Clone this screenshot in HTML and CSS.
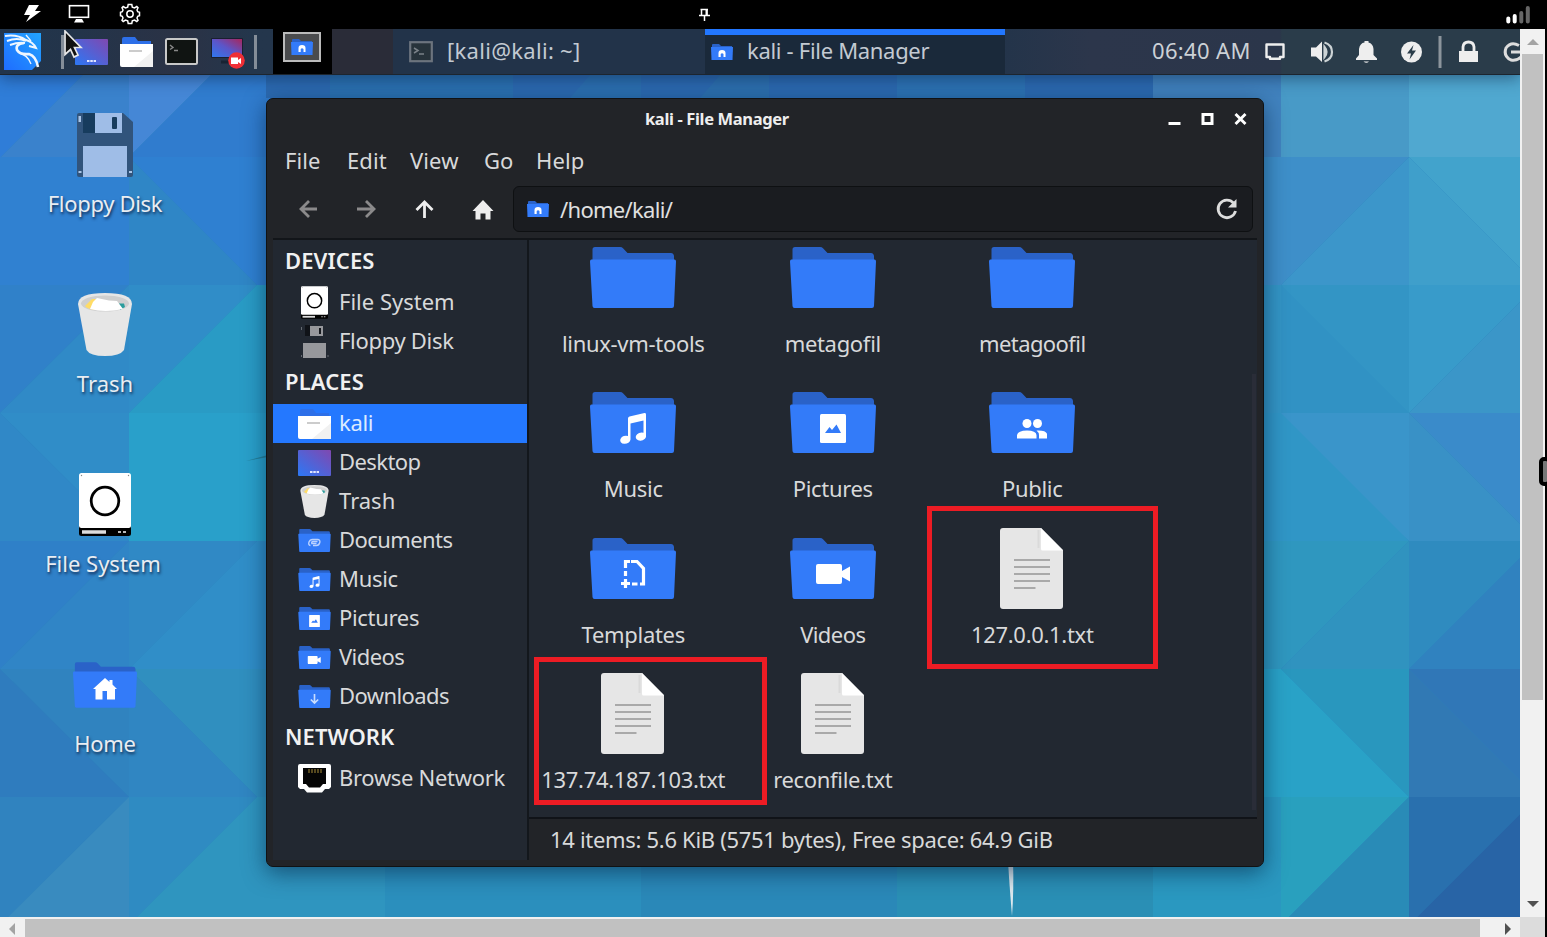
FILE: index.html
```html
<!DOCTYPE html>
<html lang="en">
<head>
<meta charset="utf-8">
<title>kali - File Manager</title>
<link rel="stylesheet" href="styles.css">
</head>
<body>
<svg class="defs" width="0" height="0">
  <defs>
    <linearGradient id="desk" x1="0" y1="1" x2="1" y2="0"><stop offset="0" stop-color="#2c78f5"/><stop offset="1" stop-color="#8048b0"/></linearGradient>
    <linearGradient id="rec" x1="0" y1="1" x2="1" y2="0"><stop offset="0" stop-color="#2f78f0"/><stop offset=".5" stop-color="#5c55c8"/><stop offset="1" stop-color="#a8265c"/></linearGradient>
    <linearGradient id="logo" x1="0" y1="1" x2="1" y2="0"><stop offset="0" stop-color="#1f6dff"/><stop offset="1" stop-color="#22a4ff"/></linearGradient>
    <symbol id="folder" viewBox="0 0 86 61">
      <path d="M2.500 15V2.500Q2.500 0 5 0H30Q32 0 33 1.200L37.500 6H81Q83.500 6 84 9V15Z" fill="#2a62c8"/>
      <path d="M1.500 12.500H84.500Q86 12.500 86 14.500L84 59Q83.900 61 82 61H4.500Q2.600 61 2.500 59L0 14.500Q0 12.500 1.500 12.500Z" fill="#337bf9"/>
    </symbol>
    <symbol id="g-home" viewBox="0 0 24 22"><path d="M12 0L0 11H2.500V21.500H9.500V13H14V21.500H22V11H24L19.500 6.500V2H16.500V4Z" fill="#fff"/></symbol>
    <symbol id="g-music" viewBox="0 0 26 31"><path d="M8 5.500Q8 4 9.500 3.600L24.500 .1Q26 0 26 1.500V22.500A5.200 4 -15 1 1 23.500 19.800V7.500L10.500 10.500V26.500A5.200 4 -15 1 1 8 23Z" fill="#fff"/></symbol>
    <symbol id="g-pic" viewBox="0 0 26 29"><rect width="26" height="29" rx="1.500" fill="#fff"/><path d="M5 19L9.500 13L12 16L16.500 10.500L21 19Z" fill="#337bf9"/></symbol>
    <symbol id="g-people" viewBox="0 0 30 20"><g fill="#fff"><circle cx="10" cy="4.500" r="4.500"/><circle cx="20.500" cy="4.500" r="4.500"/><path d="M0 19.500V16Q1 11.500 10 11.500T19.500 16V19.500ZM19.500 11.500Q30 11 30.200 16V19.500H22V16Q22 13.500 19.500 11.500Z"/></g></symbol>
    <symbol id="g-tpl" viewBox="0 0 25 30"><path d="M4.500 9V2.500H9M10 2.500H16L22.500 9.500V25H19M4.500 12V17M11 25H16.500M4.500 20V29M0 24.500H9" fill="none" stroke="#fff" stroke-width="3.200"/></symbol>
    <symbol id="g-video" viewBox="0 0 36 20"><path d="M2 0H24Q26 0 26 2V7L34 2.500V17.500L26 13V18Q26 20 24 20H2Q0 20 0 18V2Q0 0 2 0Z" fill="#fff"/></symbol>
    <symbol id="g-down" viewBox="0 0 10 12"><path d="M5 0V10M1 6L5 10L9 6" fill="none" stroke="#c7dcff" stroke-width="1.800"/></symbol>
    <symbol id="g-clip" viewBox="0 0 14 10"><path d="M3 8Q.5 7.500 1.500 4.500Q2.500 2 5 2H10Q13 2.200 12.300 5Q11.500 8 9 8H5.500M10 4H5.500Q3.800 4.200 4.300 6H9" fill="none" stroke="#b9d1ff" stroke-width="1.400"/></symbol>
    <symbol id="doc" viewBox="0 0 64 81">
      <path d="M3 0H41L63 22V78Q63 81 60 81H3Q0 81 0 78V3Q0 0 3 0Z" fill="#e6e6e6"/>
      <path d="M38.500 2V20" stroke="#dadada" stroke-width="2"/>
      <path d="M41 0L63 22.500H42.500Q41 22.500 41 21Z" fill="#fff"/>
      <path d="M14 32H50M14 39H50M14 46H50M14 53H50M14 60H35.500" stroke="#a9a9a9" stroke-width="1.900"/>
    </symbol>
    <symbol id="trash" viewBox="0 0 54 63">
      <path d="M0 11Q0 0 27 0T54 11L46 57Q42 63 27 63T8.500 57Z" fill="#e6e6e6"/>
      <ellipse cx="27" cy="10.500" rx="24" ry="8" fill="#cfcfcf"/>
      <path d="M7 13L14 6H18V17Q9 16 7 13Z" fill="#ffdc66"/><path d="M41 10.500H46L47 14L42 17Z" fill="#2a9d9d"/>
      <path d="M12 16L15 9L19 5L31 7.500L39 8L45 16Q27 20 12 16Z" fill="#fff"/>
    </symbol>
    <symbol id="drive" viewBox="0 0 52 63">
      <rect y="50" width="52" height="13" rx="2.500" fill="#000"/><rect width="52" height="55" rx="2.500" fill="#fff"/>
      <circle cx="26" cy="28" r="13.800" fill="none" stroke="#000" stroke-width="2.800"/>
      <path d="M3 59H27" stroke="#ddd" stroke-width="3.500"/><path d="M39 59H42M44 59H47" stroke="#bbb" stroke-width="2"/>
      <circle cx="2.500" cy="2.500" r=".7" fill="#888"/><circle cx="49.500" cy="2.500" r=".7" fill="#888"/>
    </symbol>
    <symbol id="deskicon" viewBox="0 0 33 26"><rect width="33" height="26" rx="1" fill="url(#desk)"/><path d="M12 22H21" stroke="#dfe5ff" stroke-width="2" stroke-dasharray="2.500 .8"/></symbol>
    <symbol id="openfolder" viewBox="0 0 33 30"><path d="M2 9V2Q2 0 4 0H15L18 4H31V9Z" fill="#2d6fe8"/><path d="M0 7H33V28Q33 30 31 30H2Q0 30 0 28Z" fill="#fff"/><path d="M33 14V30H14Z" fill="#f1f1f1"/><path d="M9 14H22" stroke="#ccc" stroke-width="2"/></symbol>
    <symbol id="minihome" viewBox="0 0 22 16"><path d="M1 4V1Q1 0 2 0H8L10 2H21V4Z" fill="#2a62c8"/><path d="M0 3H22L21.500 16H.5Z" fill="#337bf9"/><path d="M7.500 13V9Q7.500 6 11 6T14.500 9V13H12.500V10Q11 8.500 9.700 10V13Z" fill="#fff"/></symbol>
  </defs>
</svg>

<div class="viewer">
  <header class="topbar">
    <svg class="top-left" width="160" height="29" viewBox="0 0 160 29">
      <path d="M29 5H39L35 11H41L26 22L30 15H24Z" fill="#fff"/>
      <rect x="69.500" y="5.700" width="19" height="11.600" fill="none" stroke="#fff" stroke-width="1.600"/><path d="M76 19H82L84 22.500H74Z" fill="#fff"/>
      <path d="M128.200 4.500H131.800L132.300 7.200L134.500 8L136.800 6.500L138 7.700L137 10L137.700 11.700L139.500 12.200V15.800L137.700 16.300L137 18L138 20.300L136.800 21.500L134.500 20L132.300 20.800L131.800 23.500H128.200L127.700 20.800L125.500 20L123.200 21.500L122 20.300L123 18L122.300 16.300L120.500 15.800V12.200L122.300 11.700L123 10L122 7.700L123.200 6.500L125.500 8L127.700 7.200Z" fill="none" stroke="#fff" stroke-width="1.500"/>
      <circle cx="130" cy="14" r="3.200" fill="none" stroke="#fff" stroke-width="1.500"/>
    </svg>
    <svg class="pin" width="12" height="14" viewBox="0 0 12 14"><path d="M1.500 1.500H9M2.500 1V7M8 1V7M0 7.500H11M5.500 8V13" fill="none" stroke="#fff" stroke-width="1.500"/><path d="M7.500 1V7" stroke="#fff" stroke-width="2"/></svg>
    <svg class="signal" width="26" height="20" viewBox="0 0 26 20" stroke-width="4" stroke-linecap="round"><path d="M2.300 13.500V16.500M8.700 11V16.500" stroke="#fff"/><path d="M15.300 8V16.500M21.800 3V16.500" stroke="#666"/></svg>
  </header>

  <div class="middle">
    <div class="desktop">
      <svg class="wallpaper" width="1520" height="888" viewBox="0 29 1520 888">
        <rect y="29" width="1520" height="888" fill="#2b82bd"/>
        <g>
          <path d="M0 29H129L1 157H0Z" fill="#2f7dd8"/><path d="M129 29V157H1Z" fill="#3a82cc"/>
          <path d="M129 29H257L129 157Z" fill="#4587d6"/><path d="M257 29H285V157H129Z" fill="#307cce"/>
          <path d="M266 29H1153V98H266Z" fill="#2c6bb2"/>
          <path d="M330 75H513V98H330Z" fill="#2b72b2"/><path d="M590 75H641V98H570Z" fill="#2c71b2"/><path d="M720 75H769V98H700Z" fill="#2d71b0"/><path d="M897 75H1025V98H897Z" fill="#2d74b5"/>
          <path d="M1153 29H1285V157H1153Z" fill="#4183bf"/>
          <path d="M1281 29H1409V157H1281Z" fill="#489ac7"/><path d="M1409 29H1520V157H1409Z" fill="#50a8d0"/>
          <path d="M0 157H129V285H0Z" fill="#3081d1"/>
          <path d="M129 157L257 285H129Z" fill="#2f86c6"/><path d="M129 157H285V285H257Z" fill="#2f80d1"/>
          <path d="M0 285H129L0 413Z" fill="#3081c9"/><path d="M129 285V413H0Z" fill="#308ac7"/>
          <path d="M129 285H257L129 413Z" fill="#308dc8"/><path d="M257 285H285V413H129Z" fill="#299bc5"/>
          <path d="M0 413H129V541Z" fill="#308dc8"/><path d="M0 413L129 541H0Z" fill="#3088c7"/>
          <path d="M129 413H285V541H129Z" fill="#29a0ca"/><path d="M246 461L268 455V457Z" fill="#247f97"/>
          <path d="M0 541H129L0 669Z" fill="#2f80c8"/><path d="M129 541V669H0Z" fill="#3085c6"/>
          <path d="M129 541H257L129 669Z" fill="#3089c5"/><path d="M257 541H285V669H129Z" fill="#308ec8"/>
          <path d="M0 669H129V797Z" fill="#3083bf"/><path d="M0 669L129 797H0Z" fill="#2f7cbe"/>
          <path d="M129 669H285V797H257Z" fill="#308fbf"/><path d="M129 669L257 797H129Z" fill="#3086c2"/>
          <path d="M0 797H129L0 925Z" fill="#3083bf"/><path d="M129 797V925H0Z" fill="#398bbf"/>
          <path d="M129 797H257L129 925Z" fill="#2f8bc2"/><path d="M257 797H385V925H129Z" fill="#2f95bf"/>
        </g>
        <g>
          <path d="M1260 157H1409L1281 285H1260Z" fill="#3e8fc9"/><path d="M1409 157V285H1281Z" fill="#3c96ca"/>
          <path d="M1409 157H1537V285Z" fill="#42a3cc"/><path d="M1409 157L1537 285H1409Z" fill="#3f9fcb"/>
          <path d="M1260 285H1409V413H1260Z" fill="#3395c5"/><path d="M1281 285L1409 413H1281Z" fill="#3192c4"/>
          <path d="M1409 285H1537L1409 413Z" fill="#389bca"/><path d="M1537 285V413H1409Z" fill="#3b96c8"/>
          <path d="M1260 413H1409V541Z" fill="#3a95ca"/><path d="M1260 413H1281L1409 541H1260Z" fill="#3096c6"/>
          <path d="M1409 413H1537V541Z" fill="#3a8bca"/><path d="M1409 413L1537 541H1409Z" fill="#3991c6"/>
          <path d="M1260 541H1409L1281 669H1260Z" fill="#2f97bf"/><path d="M1409 541V669H1281Z" fill="#3093bf"/>
          <path d="M1409 541H1537L1409 669Z" fill="#2f8bbf"/><path d="M1537 541V669H1409Z" fill="#3082bf"/>
          <path d="M1281 669H1409V797Z" fill="#2997be"/><path d="M1260 669H1281L1409 797H1260Z" fill="#29a2c7"/>
          <path d="M1409 669H1537V797Z" fill="#3077b7"/><path d="M1409 669L1537 797H1409Z" fill="#3179b4"/>
          <path d="M1281 797H1409L1281 925Z" fill="#29a0be"/><path d="M1409 797V925H1281Z" fill="#298bb7"/>
          <path d="M1409 797H1537L1409 925Z" fill="#2970ae"/><path d="M1537 797V925H1409Z" fill="#2864a6"/>
          <path d="M385 797H641V925H385Z" fill="#2b8fbd"/><path d="M641 797H897V925H641Z" fill="#2a88b8"/><path d="M897 797H1153V925H897Z" fill="#2a8fb5"/><path d="M1153 797H1281V925H1153Z" fill="#2a98c0"/>
        </g>
        <path d="M1008 860Q1009 880 1012 916Q1014 890 1013 860Z" fill="#dce8ee"/>
      </svg>

      <nav class="panel">
        <svg class="logo" width="37" height="37" viewBox="0 0 37 37"><path d="M0 0H37V28L28 37H0Z" fill="url(#logo)"/>
          <path d="M1 3Q13 1 22 7Q29 9 32 15L25 13M3 8Q13 4 22 8M6 12Q14 9 21 10" fill="none" stroke="#eef6ff" stroke-width="1.900"/><path d="M20 10Q11 11 13 17Q16 22 25 21Q32 23 34 34" fill="none" stroke="#eef6ff" stroke-width="2.600"/><path d="M15 20Q24 22 27 31M22 2L27 8" fill="none" stroke="#eef6ff" stroke-width="1.300"/></svg>
        <i class="bar"></i>
        <svg class="l1" width="33" height="26"><use href="#deskicon"/></svg>
        <svg class="l2" width="33" height="30"><use href="#openfolder"/></svg>
        <svg class="l3" width="33" height="27" viewBox="0 0 33 27"><rect x="1" y="1" width="31" height="25" rx="1.500" fill="#101412" stroke="#c8c8c8" stroke-width="2"/><path d="M5 7L8 9.500L5 11.500M9 12.500H13" fill="none" stroke="#888" stroke-width="1.400"/></svg>
        <svg class="l4" width="34" height="31" viewBox="0 0 34 31"><rect width="32" height="20" rx="1" fill="#1a2030"/><rect x="1" y="1" width="30" height="18" fill="url(#rec)"/><path d="M10 24H24" stroke="#182333" stroke-width="3"/><circle cx="25.500" cy="22.500" r="8.300" fill="#f02f35"/><path d="M20 19.500H27V26H20ZM27 22L30 20V26L27 24Z" fill="#fff"/></svg>
        <i class="bar bar2"></i>
        <div class="workspace"><span><svg width="22" height="16"><use href="#minihome"/></svg></span></div>
        <div class="gap"></div>
        <div class="task"><svg width="24" height="22" viewBox="0 0 24 22"><rect x="1.200" y="1.200" width="21.600" height="19" fill="#27333b" stroke="#6c747e" stroke-width="2.200"/><path d="M5 7L9 9.500L5 12M10 13H15" stroke="#7a8188" fill="none" stroke-width="1.500"/></svg><span class="t-term">[kali@kali: ~]</span></div>
        <div class="task active"><svg width="22" height="16"><use href="#minihome"/></svg><span class="t-fm">kali - File Manager</span></div>
        <span class="clock">06:40 AM</span>
        <svg class="tray" width="246" height="46" viewBox="1264 29 246 46" fill="#eee">
          <path d="M1266.500 44.500H1283.500V57H1280V58.800H1270V57H1266.500Z" fill="none" stroke="#eee" stroke-width="2.400" stroke-linejoin="round"/>
          <path d="M1311 47.500H1316L1322 41.500V62L1316 56.500H1311Z"/><path d="M1324.500 47Q1328.500 52 1324.500 57ZM1324.500 42.500Q1332 45 1332 52T1324.500 61.500" fill="none" stroke="#ccd3d5" stroke-width="2.200"/>
          <path d="M1356 60V58.500L1359 55V49Q1360 43 1364.500 42.500V41H1368.500V42.500Q1373 43.500 1373.500 49V55L1377 58.500V60ZM1363.500 61.500H1369Q1366.500 64 1363.500 61.500Z"/>
          <circle cx="1411.500" cy="52" r="10.500"/><path d="M1413.500 45L1407 53.500H1411L1409.500 59.500L1416 50.500H1412Z" fill="#2b3d4a"/>
          <path d="M1440 36V68" stroke="#8c959c" stroke-width="3"/>
          <path d="M1459 51H1478V62H1459Z"/><path d="M1463 51V47Q1463.500 42 1468.500 42T1474 47V51" fill="none" stroke="#eee" stroke-width="2.800"/>
        </svg>
        <svg class="power" width="17" height="20" viewBox="1503 42 17 20"><path d="M1519 45.500Q1511 41 1506 48Q1503 56 1511 60Q1517 61 1521 57M1511 52H1521" fill="none" stroke="#ddd" stroke-width="3"/></svg>
      </nav>
      <svg class="cursor" width="21" height="30" viewBox="0 0 21 30"><path d="M2 1L18 17.500H11.500L15 25L11 27L7.500 19.500L2 24.500Z" fill="#111" stroke="#e8e8e8" stroke-width="1.700"/></svg>

      <div class="shortcut s1"><svg width="56" height="64" viewBox="0 0 56 64"><path d="M2 0H46L56 9V62Q56 64 54 64H2Q0 64 0 62V2Q0 0 2 0Z" fill="#31547c"/><path d="M6 0H18V20H6Z" fill="#173c5e"/><path d="M18 0H45V20H18ZM6 33H50V64H6Z" fill="#9fbde7"/><rect x="35" y="4" width="5" height="12" rx="1" fill="#173c5e"/><path d="M1.500 3H4V9H1.500ZM1.500 58H4.500V60H1.500ZM52 58H55V60H52Z" fill="#aac5e7"/></svg><span>Floppy Disk</span></div>
      <div class="shortcut s2"><svg width="54" height="63"><use href="#trash"/></svg><span>Trash</span></div>
      <div class="shortcut s3"><svg width="52" height="63"><use href="#drive"/></svg><span>File System</span></div>
      <div class="shortcut s4"><svg width="64" height="46"><use href="#folder" width="64" height="46"/><use href="#g-home" x="20" y="16" width="24" height="22"/></svg><span>Home</span></div>

      <section class="window">
        <div class="titlebar"><span></span><b>kali - File Manager</b>
          <svg width="84" height="18" viewBox="1167 110 84 18" fill="none" stroke="#fff"><path d="M1168.500 123.500H1180.500" stroke-width="3"/><rect x="1203" y="114.500" width="9" height="9" stroke-width="3"/><path d="M1235.500 114L1245.500 124M1245.500 114L1235.500 124" stroke-width="2.900"/></svg></div>
        <div class="menu"><span class="m1">File</span><span class="m2">Edit</span><span class="m3">View</span><span class="m4">Go</span><span class="m5">Help</span></div>
        <div class="toolbar">
          <svg width="240" height="56" viewBox="273 181 240 56" fill="none" stroke-width="2.800"><path d="M317 209H301M309 201L301 209L309 217" stroke="#8b8a8b"/><path d="M357 209H373M366 201L374 209L366 217" stroke="#8b8a8b"/><path d="M424.500 218V203M416.500 210L424.500 202L432.500 210" stroke="#eee"/><path d="M472.500 211L483 200L493.500 211H490.500V219.500H485.500V213.500H480.500V219.500H475.500V211Z" fill="#eee"/></svg>
          <div class="path"><svg width="22" height="16"><use href="#minihome"/></svg><span>/home/kali/</span>
            <svg class="reload" width="24" height="24" viewBox="0 0 24 24"><path d="M18.500 6A8.800 8.800 0 1 0 20.500 14" fill="none" stroke="#ddd" stroke-width="2.800"/><path d="M21.500 2V10.500H13Z" fill="#ddd"/></svg></div>
        </div>
        <div class="content">
          <aside>
            <h2>DEVICES</h2>
            <div class="row"><svg width="33" height="33" viewBox="0 0 33 33"><use href="#drive" x="3" width="27" height="33"/></svg><span class="wide">File System</span></div>
            <div class="row"><svg width="33" height="33" viewBox="0 0 33 33"><path d="M7 0H12V11H7Z" fill="#101318"/><path d="M12 1H25V11H12ZM5 18H28V33H5Z" fill="#97989c"/><path d="M21 3H23V9H21Z" fill="#16191e"/><path d="M3.500 2V5M3.500 30V32M30 30V32" stroke="#666b72"/></svg><span>Floppy Disk</span></div>
            <h2>PLACES</h2>
            <div class="row selected"><svg width="33" height="30"><use href="#openfolder"/></svg><span>kali</span></div>
            <div class="row"><svg width="33" height="26"><use href="#deskicon"/></svg><span class="tight">Desktop</span></div>
            <div class="row"><svg width="33" height="33"><use href="#trash"/></svg><span class="wide">Trash</span></div>
            <div class="row fold"><svg width="33" height="23"><use href="#folder"/><use href="#g-clip" x="9.500" y="8.500" width="14" height="10"/></svg><span class="tight">Documents</span></div>
            <div class="row fold"><svg width="33" height="23"><use href="#folder"/><use href="#g-music" x="11" y="8" width="11" height="12"/></svg><span>Music</span></div>
            <div class="row fold"><svg width="33" height="23"><use href="#folder"/><use href="#g-pic" x="11" y="8" width="11" height="12"/></svg><span>Pictures</span></div>
            <div class="row fold"><svg width="33" height="23"><use href="#folder"/><use href="#g-video" x="9.500" y="10" width="14" height="8"/></svg><span class="tight">Videos</span></div>
            <div class="row fold"><svg width="33" height="23"><use href="#folder"/><use href="#g-down" x="11.500" y="9" width="10" height="11"/></svg><span class="tight">Downloads</span></div>
            <h2>NETWORK</h2>
            <div class="row"><svg width="33" height="29" viewBox="0 0 33 29"><path d="M2 0H31Q33 0 33 2V23L31 25H27L24 28.500H9L6 25H2L0 23V2Q0 0 2 0Z" fill="#fff"/><path d="M5 4H28V20H25L22 23.500H11L8 20H5Z" fill="#050505"/><path d="M11 5V9M14 5V9M17 5V9M20 5V9M23 5V9" stroke="#8c7630" stroke-width="1.200"/></svg><span>Browse Network</span></div>
          </aside>
          <main>
            <div class="files">
              <div class="item"><svg width="86" height="81"><use href="#folder" y="10" height="61"/></svg><span>linux-vm-tools</span></div>
              <div class="item"><svg width="86" height="81"><use href="#folder" y="10" height="61"/></svg><span>metagofil</span></div>
              <div class="item"><svg width="86" height="81"><use href="#folder" y="10" height="61"/></svg><span class="tight">metagoofil</span></div>
              <div class="item"><svg width="86" height="81"><use href="#folder" y="10" height="61"/><use href="#g-music" x="30" y="31" width="26" height="31"/></svg><span>Music</span></div>
              <div class="item"><svg width="86" height="81"><use href="#folder" y="10" height="61"/><use href="#g-pic" x="30" y="32" width="26" height="29"/></svg><span>Pictures</span></div>
              <div class="item"><svg width="86" height="81"><use href="#folder" y="10" height="61"/><use href="#g-people" x="28" y="37" width="30" height="20"/></svg><span>Public</span></div>
              <div class="item"><svg width="86" height="81"><use href="#folder" y="10" height="61"/><use href="#g-tpl" x="31" y="31" width="25" height="30"/></svg><span>Templates</span></div>
              <div class="item"><svg width="86" height="81"><use href="#folder" y="10" height="61"/><use href="#g-video" x="26" y="36" width="36" height="20"/></svg><span class="tight">Videos</span></div>
              <div class="item"><svg width="64" height="81"><use href="#doc"/></svg><span>127.0.0.1.txt</span></div>
              <div class="item"><svg width="64" height="81"><use href="#doc"/></svg><span>137.74.187.103.txt</span></div>
              <div class="item"><svg width="64" height="81"><use href="#doc"/></svg><span>reconfile.txt</span></div>
              <i class="scroll"></i>
            </div>
            <footer><span>14 items: 5.6 KiB (5751 bytes), Free space: 64.9 GiB</span></footer>
          </main>
        </div>
      </section>
      <div class="mark mark-a"></div>
      <div class="mark mark-b"></div>
    </div>
    <div class="vscroll"><i class="up"></i><i class="vthumb"></i><i class="down"></i></div>
    <i class="handle"></i>
  </div>
  <div class="hscroll"><div class="htrack"><i class="left"></i><i class="hthumb"></i><i class="right"></i></div><i class="corner"></i></div>
</div>
</body>
</html>
```
FILE: styles.css
```css
* { box-sizing: border-box; }
body { margin: 0; background: #000; overflow: hidden; font-family: "Noto Sans", sans-serif; font-size: 22px; letter-spacing: -.31px; color: #d8d9da; }
svg { display: block; flex: none; }
.defs { position: absolute; }
span, b, h2 { white-space: nowrap; }
.viewer { width: 1547px; height: 937px; display: grid; grid-template-rows: 29px 888px 20px; background: #000; }

.topbar { display: flex; align-items: flex-start; }
.pin { margin: 8px 0 0 539px; }
.signal { margin: 5px 0 0 795px; }

.middle { display: flex; position: relative; }
.desktop { width: 1520px; height: 888px; position: relative; overflow: hidden; }
.wallpaper { position: absolute; left: 0; top: 0; }

.panel { position: relative; height: 46px; display: flex; align-items: center; background: linear-gradient(90deg, #22354b 0, #23344a 80px, #2b3245 180px, #24364c 250px, #23344a 1000px, #2c364b 1090px, #2b364a 1280px, #2a3c4a 1282px); border-bottom: 1px solid #1d252e; box-shadow: 0 3px 16px #0a1c3c80; }
.logo { margin: 0 0 0 4px; }
.bar { width: 3px; height: 34px; background: #848d98; margin-left: 20px; }
.l1 { margin-left: 11px; }
.l2 { margin-left: 12px; }
.l3 { margin-left: 12px; }
.l4 { margin: 4px 0 0 13px; }
.bar2 { margin-left: 9px; }
.workspace { margin-left: 16px; width: 59px; height: 45px; background: #000; padding: 3px 0 0 10px; }
.workspace span { width: 38px; height: 30px; border: 2px solid #bbb; background: #4a4b4d; display: flex; align-items: center; justify-content: center; }
.gap { width: 61px; height: 45px; background: #2a2c38; }
.task { width: 312px; height: 45px; display: flex; align-items: center; padding-left: 16px; background: #223349; color: #c3cad2; }
.task span { margin: 0 0 4px 14px; }
.task.active { width: 300px; background: #1a293a; border-top: 6px solid #2277ff; padding: 0 0 5px 6px; }
.t-term { letter-spacing: .3px; }
.clock { margin: 0 0 4px 147px; width: 99px; letter-spacing: .35px; color: #ccd1d6; }
.tray { margin-left: 13px; }
.power { margin-left: -7px; }
.cursor { position: absolute; left: 63px; top: 1px; }

.shortcut { position: absolute; left: 0; width: 210px; display: flex; flex-direction: column; align-items: center; justify-content: space-between; color: #e9edf2; text-shadow: 1px 2px 3px #102a50; line-height: 26px; }
.s1 { top: 84px; height: 103px; }
.s2 { top: 264px; height: 103px; letter-spacing: 0; }
.s3 { top: 444px; height: 103px; letter-spacing: 0; }
.s3 span { margin-left: -4px; }
.s4 { top: 633px; height: 94px; }

.window { position: absolute; left: 266px; top: 69px; width: 998px; height: 769px; border: 1px solid #101214; border-radius: 7px; background: #222428; padding: 0 6px 6px; box-shadow: 0 6px 22px #04203f90; }
.titlebar { height: 39px; display: grid; grid-template-columns: 372px 1fr auto; align-items: center; padding-right: 6px; }
.titlebar b { font-size: 16.500px; letter-spacing: -.36px; color: #eee; }
.menu { height: 43px; display: flex; align-items: center; padding-left: 12px; letter-spacing: .1px; }
.menu span { width: 62px; }
.menu .m3 { width: 74px; margin-left: 1px; }
.menu .m4 { width: 52px; }
.toolbar { height: 57px; display: flex; align-items: center; padding-bottom: 1px; }
.path { width: 740px; height: 46px; border: 1px solid #0e1012; border-radius: 6px; background: #1a1c20; display: flex; align-items: center; padding: 0 13px; color: #e0e0e0; }
.path span { margin: 0 0 1px 11px; letter-spacing: -.7px; }
.reload { margin-left: auto; }
.content { height: 622px; border-top: 2px solid #121519; display: flex; background: #222831; }
aside { width: 256px; border-right: 2px solid #13171c; }
h2 { margin: 0; height: 43px; line-height: 41px; padding-left: 12px; font-size: 22px; font-weight: 600; letter-spacing: .1px; color: #f1f1f1; }
.row { height: 39px; display: flex; align-items: center; padding-left: 25px; }
.row span { margin: 0 0 4px 8px; }
.row.selected { background: #2478ff; width: 254px; color: #dcebff; }
.tight { letter-spacing: -.58px; }
.wide { letter-spacing: 0; }
main { flex: 1; display: flex; flex-direction: column; }
.files { position: relative; height: 577px; display: grid; grid-template-columns: repeat(3, 199.5px); grid-auto-rows: 145.5px; padding-left: 4.5px; align-content: start; }
.item { display: flex; flex-direction: column; align-items: center; margin-top: -3.500px; line-height: 26px; }
.item span { margin-top: 12px; }
.scroll { position: absolute; right: 1px; top: 134px; width: 4px; height: 436px; background: #2a2d38; }
footer { flex: 1; border-top: 2px solid #101318; background: #222428; display: flex; align-items: center; padding: 0 0 2px 21px; }

.mark { position: absolute; border: 5px solid #ed1c24; }
.mark-a { left: 927px; top: 477px; width: 231px; height: 163px; }
.mark-b { left: 534px; top: 628px; width: 233px; height: 148px; }

.vscroll { width: 25px; height: 888px; background: #f1f1f1; display: flex; flex-direction: column; align-items: center; }
.up { margin: 10px 0 9px; border: 6px solid transparent; border-top: 0; border-bottom: 6px solid #a3a3a3; }
.vthumb { width: 21px; height: 646px; background: #c1c1c1; }
.down { margin-top: 201px; border: 6px solid transparent; border-bottom: 0; border-top: 6px solid #505050; }
.handle { position: absolute; left: 1539px; top: 428px; width: 12px; height: 29px; border: 4px solid #000; border-radius: 5px; background: #777; }
.hscroll { display: flex; width: 1545px; background: #f1f1f1; }
.htrack { width: 1520px; display: flex; align-items: center; }
.left { margin: 4px 10px 0 9px; border: 6px solid transparent; border-left: 0; border-right: 6px solid #a3a3a3; }
.hthumb { width: 1455px; height: 18px; background: #c1c1c1; align-self: flex-end; }
.right { margin: 4px 0 0 25px; border: 6px solid transparent; border-right: 0; border-left: 6px solid #505050; }
.corner { width: 25px; background: #dcdcdc; }
```
